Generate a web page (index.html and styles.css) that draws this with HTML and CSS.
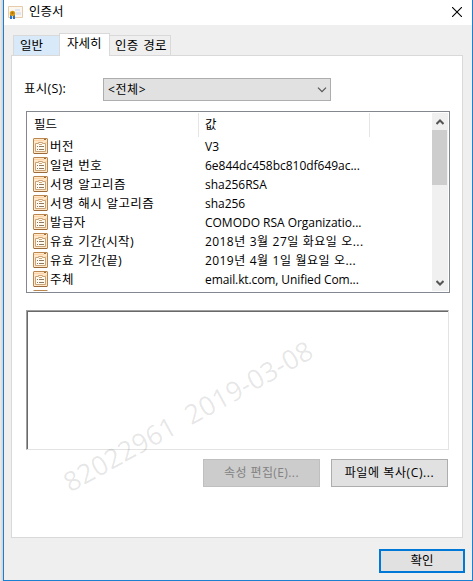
FILE: index.html
```html
<!DOCTYPE html>
<html lang="ko">
<head>
<meta charset="utf-8">
<title>인증서</title>
<link rel="stylesheet" href="styles.css">
</head>
<body>
<svg class="defs" aria-hidden="true">
  <symbol id="field" viewBox="0 0 15 16">
    <path fill="#b98650" d="M1 0h13l1 1v14l-1 1H1l-1-1V1z"/>
    <path fill="#ffe7c8" d="M1 1h13v14H1z"/>
    <path fill="#ffd3a5" d="M1 2h10v1H1zM12 4h2v1h-2z"/>
    <path fill="#9a6a3b" d="M11 1h2v1h-2zM1 15h13v1H1z"/>
    <path fill="#fffaf0" stroke="#c9a47b" d="M2.500 5.500h3v-1h4v1h3v8h-10z"/>
    <path fill="#8f785e" d="M4 8h1v1H4zM6 8h5v1H6zM4 11h1v1H4zM6 11h5v1H6z"/>
    <path fill="#d3a574" d="M6 6h3v1H6z"/>
  </symbol>
</svg>
<div class="window">
  <header class="titlebar">
    <svg class="cert" width="16" height="14" viewBox="0 0 16 14">
      <path fill="#fbf6ee" stroke="#e5cba9" d="M.5.500h14v11H.5z"/>
      <path fill="#e2e6f2" d="M7 3h5v2H7zM8 6h5v3H8z"/>
      <path fill="#2874cf" d="M2 9h2v4H2zM5 9h2v4H5z"/>
      <circle cx="4.500" cy="7.500" r="2.700" fill="#d59a18"/>
      <circle cx="4.500" cy="7" r="1.200" fill="#b87505"/>
    </svg>
    <h1>인증서</h1>
    <svg class="close" width="10" height="10" viewBox="0 0 10 10"><path d="M0 0l10 10M10 0L0 10" stroke="#000" stroke-width="1.100"/></svg>
  </header>
  <main>
    <nav class="tabs">
      <span class="tab hot">일반</span><span class="tab active">자세히</span><span class="tab path">인증 경로</span>
    </nav>
    <section class="panel">
      <div class="show"><label>표시(S):</label>
        <div class="combo"><span>&lt;전체&gt;</span><svg width="10" height="6" viewBox="0 0 10 6"><path d="M1 .700l4 4 4-4" fill="none" stroke="#555" stroke-width="1.200"/></svg></div>
      </div>
      <div class="list">
        <div class="rows">
          <div class="head"><span>필드</span><span>값</span></div>
          <div class="row"><svg><use href="#field"/></svg><span>버전</span><span class="v">V3</span></div>
          <div class="row"><svg><use href="#field"/></svg><span>일련 번호</span><span class="v">6e844dc458bc810df649ac...</span></div>
          <div class="row"><svg><use href="#field"/></svg><span>서명 알고리즘</span><span class="v">sha256RSA</span></div>
          <div class="row"><svg><use href="#field"/></svg><span>서명 해시 알고리즘</span><span class="v">sha256</span></div>
          <div class="row"><svg><use href="#field"/></svg><span>발급자</span><span class="v">COMODO RSA Organizatio...</span></div>
          <div class="row"><svg><use href="#field"/></svg><span>유효 기간(시작)</span><span class="v date">2018년 3월 27일 화요일 오...</span></div>
          <div class="row"><svg><use href="#field"/></svg><span>유효 기간(끝)</span><span class="v date">2019년 4월 1일 월요일 오...</span></div>
          <div class="row"><svg><use href="#field"/></svg><span>주체</span><span class="v subject">email.kt.com, Unified Com...</span></div>
          <div class="row"><svg><use href="#field"/></svg></div>
        </div>
        <div class="scroll">
          <svg width="8" height="6" viewBox="0 0 8 6"><path d="M.5 5L4 1.500 7.500 5" fill="none" stroke="#555" stroke-width="2"/></svg>
          <div class="thumb"></div>
          <svg class="down" width="8" height="6" viewBox="0 0 8 6"><path d="M.5 1L4 4.500 7.500 1" fill="none" stroke="#555" stroke-width="2"/></svg>
        </div>
      </div>
      <div class="detail"></div>
      <div class="actions"><div class="btn disabled">속성 편집(E)...</div><div class="btn copy">파일에 복사(C)...</div></div>
    </section>
    <div class="btn ok">확인</div>
  </main>
  <div class="watermark">82022961&nbsp; 2019-03-08</div>
</div>
</body>
</html>
```
FILE: styles.css
```css
* { box-sizing: border-box; }
body {
  margin: 0;
  padding-left: 3px;
  height: 581px;
  overflow: hidden;
  background: linear-gradient(90deg, #ededed, #cfcfcf 3px);
  font: 12px/18px "Open Sans", "Noto Sans CJK KR", sans-serif;
  color: #000;
}
.defs { position: absolute; width: 0; height: 0; }
.window {
  position: relative;
  width: 470px;
  height: 581px;
  border: 1px solid #1a80d1;
  border-top: 0;
  background: #efefef;
  white-space: nowrap;
}
.titlebar {
  display: flex;
  align-items: center;
  height: 25px;
  padding: 0 10px 0 4px;
  background: #fff;
}
.titlebar h1 { margin: 0 auto 1px 5px; font-size: 12.500px; font-weight: 400; }
.cert { margin-top: 1px; }
.close { margin-bottom: 1px; }
main { padding: 8px 7px 0; }
.tabs { display: flex; align-items: flex-end; height: 22px; padding-left: 2px; }
.tab {
  height: 20px;
  padding-left: 6px;
  border: 1px solid #d9d9d9;
  border-width: 1px 0 0 1px;
  line-height: 19px;
  font-size: 12.500px;
}
.hot { width: 46px; background: #d8eaf9; }
.active { width: 51px; height: 23px; margin-bottom: -1px; padding-left: 7px; border-right-width: 1px; background: #fff; z-index: 1; line-height: 20px; }
.path { width: 61px; padding-left: 5px; border-left: 0; border-right-width: 1px; letter-spacing: .3px; word-spacing: 1px; }
.panel {
  width: 452px;
  height: 483px;
  padding: 22px 12px 0 14px;
  border: 1px solid #d9d9d9;
  background: #fff;
}
.show { display: flex; height: 23px; }
.show label { width: 77px; margin: 0 2px 0 -2px; line-height: 21px; font-size: 12.500px; letter-spacing: .25px; }
.combo {
  display: flex;
  align-items: center;
  justify-content: space-between;
  width: 228px;
  height: 23px;
  padding: 0 3px 0 4px;
  border: 1px solid #adadad;
  background: #e1e1e1;
  letter-spacing: .6px;
}
.list {
  display: flex;
  width: 424px;
  height: 182px;
  margin-top: 10px;
  padding: 1px;
  border: 1px solid #828790;
  overflow: hidden;
}
.rows { width: 404px; height: 178px; overflow: hidden; }
.head { display: flex; height: 24px; line-height: 23px; font-size: 12.500px; }
.head span { width: 171px; padding-left: 6px; border-right: 1px solid #e5e5e5; }
.row { display: flex; align-items: flex-start; height: 19px; }
.row svg { width: 15px; height: 16px; margin: 1px 2px 0 5px; }
.row span { width: 155px; line-height: 19px; font-size: 12.500px; letter-spacing: .4px; word-spacing: .8px; }
.row .v { width: auto; font-size: 12px; letter-spacing: -.02px; word-spacing: 0; }
.row .date { letter-spacing: .42px; word-spacing: .6px; }
.row .subject { letter-spacing: -.1px; }
.scroll { display: flex; flex-direction: column; align-items: center; width: 16px; height: 178px; background: #f0f0f0; }
.scroll svg { margin: 6px 0 5px; }
.scroll .down { margin: auto 0 5px; }
.thumb { width: 15px; height: 55px; margin-right: 1px; background: #cdcdcd; }
.detail {
  width: 423px;
  height: 140px;
  margin-top: 17px;
  border: 1px solid #a0a0a0;
  border-right-color: #e3e3e3;
  border-bottom-color: #e3e3e3;
  box-shadow: inset 1px 1px #696969;
}
.actions { display: flex; justify-content: flex-end; gap: 11px; margin-top: 9px; padding-right: 2px; letter-spacing: .4px; }
.btn { width: 117px; height: 28px; border: 1px solid #adadad; background: #e1e1e1; text-align: center; line-height: 26px; }
.disabled { border-color: #bfbfbf; background: #ccc; color: #838383; }
.copy { letter-spacing: .6px; }
.ok { width: 86px; height: 24px; margin: 11px 0 0 auto; border: 2px solid #0078d7; line-height: 19px; font-size: 12.500px; }
.watermark {
  position: absolute;
  left: 38px;
  top: 398px;
  width: 292px;
  text-align: center;
  font-size: 27px;
  line-height: 36px;
  letter-spacing: .1px;
  font-family: "Open Sans", sans-serif;
  color: rgba(0, 0, 0, .1);
  transform: rotate(-29deg);
}
```
